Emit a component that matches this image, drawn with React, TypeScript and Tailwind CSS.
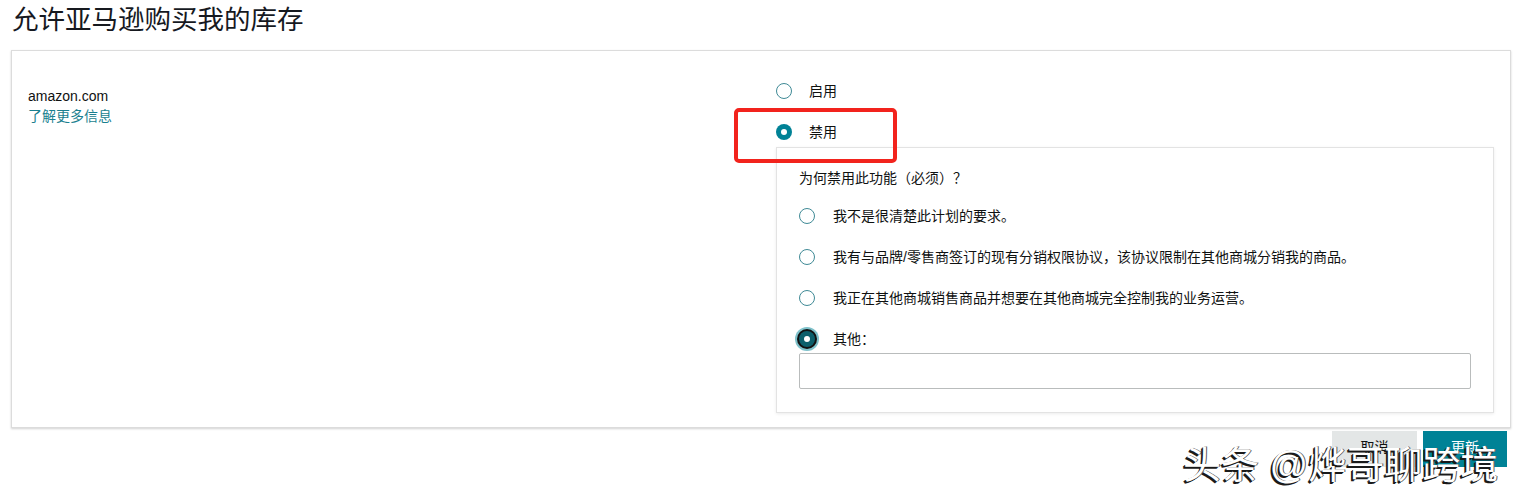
import { useState } from "react";

const FONT = { fontFamily: '"Liberation Sans", "Noto Sans CJK SC", Arial, sans-serif' };

const REASONS = [
  "我不是很清楚此计划的要求。",
  "我有与品牌/零售商签订的现有分销权限协议，该协议限制在其他商城分销我的商品。",
  "我正在其他商城销售商品并想要在其他商城完全控制我的业务运营。",
  "其他：",
];

function Radio({ checked, focused }: { checked: boolean; focused?: boolean }) {
  if (!checked) {
    return <span className="block w-4 h-4 rounded-full border border-[#3f8a96] bg-white shrink-0" />;
  }
  return (
    <span
      className={`flex items-center justify-center w-4 h-4 rounded-full shrink-0 ${
        focused
          ? "bg-[#0b5f6b] shadow-[0_0_0_2px_#111,0_0_0_4px_#7fc2cb]"
          : "bg-[#008296]"
      }`}
    >
      <span className="w-[6px] h-[6px] rounded-full bg-white" />
    </span>
  );
}

export default function App() {
  const [mode, setMode] = useState<"on" | "off">("off");
  const [reason, setReason] = useState(3);

  return (
    <div className="relative min-h-[501px] bg-white text-[#0f1111]" style={FONT}>
      {/* heading */}
      <h1 className="pl-[12px] pt-[2px] text-[26.5px] leading-[36px] font-normal text-[#16191f]">
        允许亚马逊购买我的库存
      </h1>

      {/* settings card */}
      <div className="ml-[11px] mt-[12px] w-[1500px] border border-[#dcdcdc] shadow-[0_1px_2px_rgba(0,0,0,0.18)] bg-white px-[16px] pt-[32px] pb-[14px]">
        <div className="grid grid-cols-2 gap-x-[30px]">
          <div className="pt-[3px]">
            <div className="text-[14px] leading-[20px]">amazon.com</div>
            <a className="block text-[14px] leading-[20px] text-[#1a7f8f]">了解更多信息</a>
          </div>

          <div>
            <label className="flex items-center gap-[17px] h-[16px] cursor-pointer" onClick={() => setMode("on")}>
              <Radio checked={mode === "on"} />
              <span className="text-[14px] leading-[16px]">启用</span>
            </label>
            <label className="flex items-center gap-[17px] h-[16px] mt-[25px] cursor-pointer" onClick={() => setMode("off")}>
              <Radio checked={mode === "off"} />
              <span className="text-[14px] leading-[16px]">禁用</span>
            </label>

            {/* reason panel */}
            <div className="mt-[7px] border border-[#e3e3e3] shadow-[0_1px_3px_rgba(0,0,0,0.08)] px-[22px] pt-[20px] pb-[23px]">
              <div className="text-[14px] leading-[20px]">为何禁用此功能（必须）？</div>
              <div className="mt-[20px]">
                {REASONS.map((r, i) => (
                  <label
                    key={r}
                    className={`flex items-center gap-[18px] h-[16px] cursor-pointer ${i > 0 ? "mt-[25px]" : ""}`}
                    onClick={() => setReason(i)}
                  >
                    <Radio checked={reason === i} focused={i === 3} />
                    <span className="text-[14px] leading-[16px]">{r}</span>
                  </label>
                ))}
              </div>
              <input
                type="text"
                className="mt-[6px] block w-full h-[36px] border border-[#b9bcbc] rounded-[2px] outline-none px-2 text-[14px]"
              />
            </div>
          </div>
        </div>
      </div>

      {/* actions */}
      <div className="flex justify-end gap-[6px] w-[1507px] mt-[3px]">
        <button className="w-[85px] h-[36px] bg-[#e3e6e6] text-[14px] text-[#0f1111] pb-[4px]">取消</button>
        <button className="w-[84px] h-[36px] bg-[#008296] text-[14px] text-white pb-[4px]">更新</button>
      </div>

      {/* highlight annotation */}
      <div className="absolute left-[734px] top-[108px] w-[163px] h-[55px] border-[4px] border-[#f2231d] rounded-[5px] pointer-events-none" />

      {/* watermark */}
      <div className="absolute left-[1183px] top-[442px] text-[38px] leading-[46px] text-white pointer-events-none whitespace-nowrap [text-shadow:-2px_2px_0_#1a1a1a,-1px_1px_0_#1a1a1a,1px_0_0_#555]">
        头条 @烨哥聊跨境
      </div>
    </div>
  );
}
